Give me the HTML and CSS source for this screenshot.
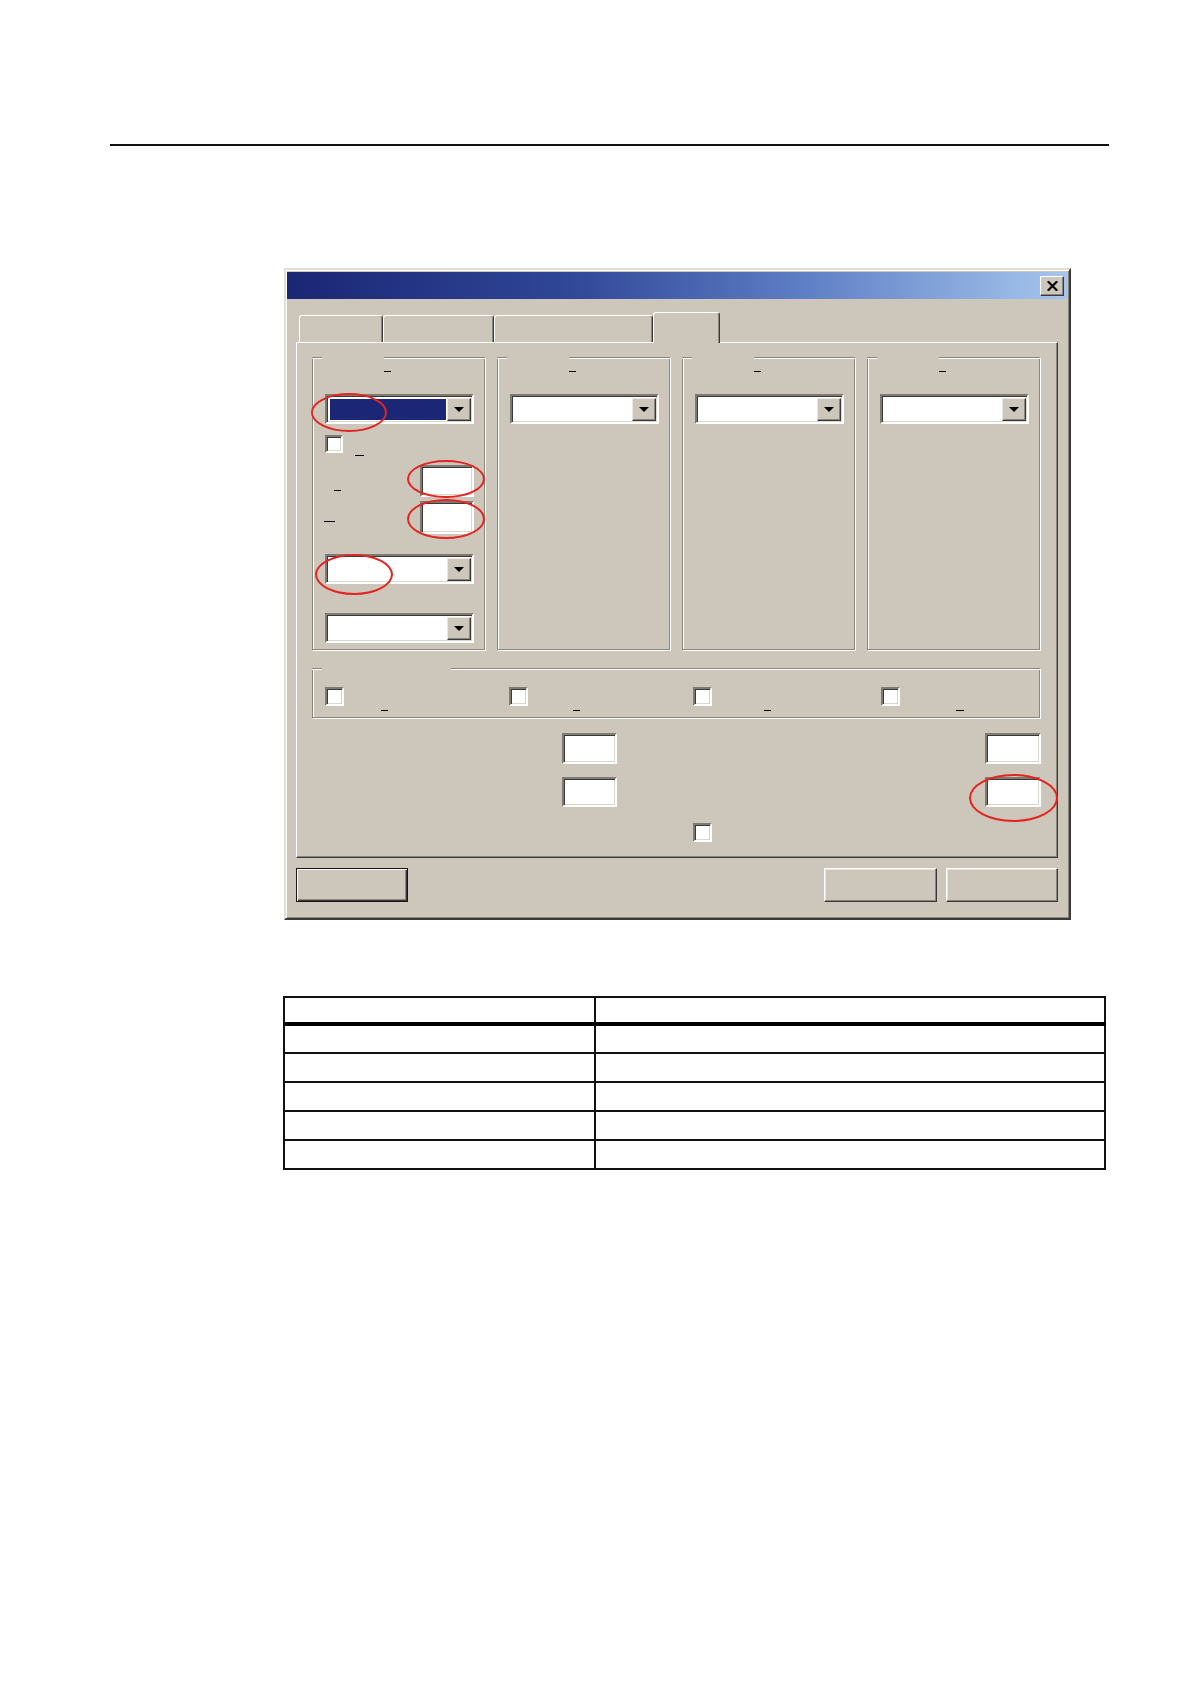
FILE: index.html
```html
<!DOCTYPE html>
<html lang="de">
<head>
<meta charset="utf-8">
<title>Dialog</title>
<link rel="stylesheet" href="styles.css">
</head>
<body>
<div class="page">
  <div class="rule"></div>

  <div class="dialog">
    <div class="titlebar">
      <button class="close" aria-label="Schließen">
        <svg width="11" height="10" viewBox="0 0 11 10"><path d="M1.5 1 L9.5 9 M9.5 1 L1.5 9" stroke="#000" stroke-width="2.2" stroke-linecap="square"/></svg>
      </button>
    </div>

    <div class="tabs">
      <div class="tab t1"></div>
      <div class="tab t2"></div>
      <div class="tab t3"></div>
      <div class="tab active t4"></div>
    </div>

    <div class="panel">
      <div class="groups">
        <div class="group">
          <div class="gtop"><span class="seg lead"></span><span class="gap"></span><span class="seg rest"></span></div>
          <span class="ul gl"></span>
          <div class="combo"><div class="field sel"></div><div class="drop"><i></i></div></div>
          <div class="cbrow"><span class="cb"></span><span class="ul"></span></div>
          <div class="frow f1"><span class="ul"></span><span class="tb"></span></div>
          <div class="frow f2"><span class="ul"></span><span class="tb"></span></div>
          <div class="combo c2"><div class="field"></div><div class="drop"><i></i></div></div>
          <div class="combo c3"><div class="field"></div><div class="drop"><i></i></div></div>
        </div>
        <div class="group">
          <div class="gtop"><span class="seg lead"></span><span class="gap"></span><span class="seg rest"></span></div>
          <span class="ul gl"></span>
          <div class="combo"><div class="field"></div><div class="drop"><i></i></div></div>
        </div>
        <div class="group">
          <div class="gtop"><span class="seg lead"></span><span class="gap"></span><span class="seg rest"></span></div>
          <span class="ul gl"></span>
          <div class="combo"><div class="field"></div><div class="drop"><i></i></div></div>
        </div>
        <div class="group">
          <div class="gtop"><span class="seg lead"></span><span class="gap"></span><span class="seg rest"></span></div>
          <span class="ul gl"></span>
          <div class="combo"><div class="field"></div><div class="drop"><i></i></div></div>
        </div>
      </div>

      <div class="group bgroup">
        <div class="gtop"><span class="seg lead"></span><span class="gap wide"></span><span class="seg rest"></span></div>
        <div class="brow">
          <div class="bcell b1"><span class="cb"></span><span class="ul"></span></div>
          <div class="bcell b2"><span class="cb"></span><span class="ul"></span></div>
          <div class="bcell b3"><span class="cb"></span><span class="ul"></span></div>
          <div class="bcell b4"><span class="cb"></span><span class="ul"></span></div>
        </div>
      </div>

      <div class="lower">
        <span class="tb ta1"></span>
        <span class="tb tc1"></span>
        <span class="tb ta2"></span>
        <span class="tb tc2"></span>
      </div>
      <div class="lcheck"><span class="cb"></span></div>
    </div>

    <div class="buttons">
      <button class="btn default"></button>
      <div class="right">
        <button class="btn w113"></button>
        <button class="btn"></button>
      </div>
    </div>

    <span class="mark m1"></span>
    <span class="mark m2"></span>
    <span class="mark m3"></span>
    <span class="mark m4"></span>
    <span class="mark m5"></span>
  </div>

  <table class="tbl">
    <colgroup><col class="col1"><col class="col2"></colgroup>
    <thead><tr><th></th><th></th></tr></thead>
    <tbody>
      <tr><td></td><td></td></tr>
      <tr><td></td><td></td></tr>
      <tr><td></td><td></td></tr>
      <tr><td></td><td></td></tr>
      <tr><td></td><td></td></tr>
    </tbody>
  </table>
</div>
</body>
</html>
```

FILE: styles.css
```css
* { box-sizing: border-box; }

body {
  margin: 0;
  background: #fff;
  font-family: "Liberation Sans", Arial, sans-serif;
  font-size: 12px;
  color: #000;
}

.page {
  width: 1190px;
  height: 1684px;
  padding-top: 144px;
}

.rule {
  margin-left: 110px;
  width: 999px;
  height: 2px;
  background: #111;
}

/* ---------- dialog frame ---------- */
.dialog {
  position: relative;
  margin: 122px 0 0 284px;
  width: 787px;
  height: 652px;
  background: #cdc6ba;
  border: 2px solid;
  border-color: #e4dfd6 #3c3a36 #3c3a36 #e4dfd6;
  box-shadow: inset 1px 1px 0 #fff, inset -1px -1px 0 #8a867e;
  padding: 2px 1px 0 1px;
}

.titlebar {
  height: 27px;
  background: linear-gradient(to right, #1b2675 0%, #2f4596 35%, #5c7cc4 65%, #a6c6ee 100%);
  display: flex;
  justify-content: flex-end;
  align-items: center;
  padding-right: 4px;
}

.close {
  width: 24px;
  height: 20px;
  padding: 0;
  margin: 0;
  background: #cdc6ba;
  border: 1px solid;
  border-color: #fff #3c3a36 #3c3a36 #fff;
  box-shadow: inset -1px -1px 0 #8a867e;
  display: flex;
  align-items: center;
  justify-content: center;
}

/* ---------- tabs ---------- */
.tabs {
  position: relative;
  z-index: 1;
  display: flex;
  align-items: flex-end;
  height: 30px;
  margin: 13px 0 0 12px;
}

.tab {
  height: 27px;
  background: #cdc6ba;
  border-top: 1px solid #fff;
  border-left: 1px solid #fff;
  border-right: 1px solid #3c3a36;
  box-shadow: inset -1px 0 0 #8a867e;
  border-radius: 3px 3px 0 0;
}
.t1 { width: 84px; }
.t2 { width: 111px; }
.t3 { width: 159px; }
.t4 { width: 67px; }
.tab.active {
  height: 31px;
  margin-bottom: -1px;
}

/* ---------- tab panel ---------- */
.panel {
  margin: 0 10px 0 9px;
  height: 516px;
  border-top: 1px solid #fff;
  border-left: 1px solid #fff;
  border-right: 1px solid #3c3a36;
  border-bottom: 1px solid #3c3a36;
  box-shadow: inset -1px -1px 0 #8a867e;
  padding: 14px 17px 0 15px;
}

.groups {
  display: grid;
  grid-template-columns: repeat(4, 1fr);
  column-gap: 12px;
}

.group {
  height: 293px;
  border: 1px solid #8a867e;
  border-top: 0;
  box-shadow: inset 1px 0 0 #fff, 1px 1px 0 #fff;
  padding: 0 10px 0 12px;
}

.gtop {
  display: flex;
  height: 2px;
  margin: 0 -11px 0 -13px;
}
.seg {
  display: block;
  height: 2px;
  border-top: 1px solid #8a867e;
  border-bottom: 1px solid #fff;
}
.lead { width: 10px; }
.gap { width: 62px; }
.gap.wide { width: 129px; }
.rest { flex: 1; }

.ul {
  display: block;
  height: 1px;
  background: #000;
  flex: none;
}
.gl {
  width: 7px;
  margin: 12px 0 0 59px;
}

/* sunken white controls */
.combo, .cb, .tb {
  background: #fff;
  border: 2px solid;
  border-color: #7f7b74 #fff #fff #7f7b74;
  box-shadow: inset 1px 1px 0 #3c3a36, inset -1px -1px 0 #dcd7ce;
}

.combo {
  display: flex;
  height: 30px;
  margin-top: 22px;
  padding: 2px 1px 1px 2px;
}
.field { flex: 1; }
.field.sel {
  margin: 1px;
  background: #1b2676;
}
.drop {
  width: 24px;
  background: #cdc6ba;
  border: 1px solid;
  border-color: #ece8e0 #3c3a36 #3c3a36 #ece8e0;
  box-shadow: inset -1px -1px 0 #8a867e;
  display: flex;
  align-items: center;
  justify-content: center;
}
.drop i {
  display: block;
  width: 0;
  height: 0;
  border-left: 5px solid transparent;
  border-right: 5px solid transparent;
  border-top: 5px solid #000;
}

.cb {
  display: block;
  flex: none;
  width: 18px;
  height: 18px;
}

.cbrow {
  display: flex;
  height: 18px;
  margin-top: 11px;
}
.cbrow .ul {
  width: 9px;
  margin: 20px 0 0 12px;
}

.frow {
  display: flex;
  justify-content: space-between;
}
.frow .tb {
  display: block;
  width: 54px;
  height: 100%;
}
.f1 { margin-top: 12px; height: 32px; }
.f2 { margin-top: 4px; height: 33px; }
.f1 .ul { width: 7px; margin: 25px 0 0 9px; }
.f2 .ul { width: 11px; margin: 20px 0 0 -1px; }

.c2 { margin-top: 20px; }
.c3 { margin-top: 29px; }

/* bottom option group */
.group.bgroup {
  height: 50px;
  margin-top: 18px;
}
.brow {
  display: grid;
  grid-template-columns: 184px 184px 188px 1fr;
  margin-top: 17px;
}
.bcell { display: flex; }
.bcell .cb { width: 19px; height: 19px; }
.bcell .ul { margin-top: 23px; }
.b1 .ul { width: 7px; margin-left: 37px; }
.b2 .ul { width: 7px; margin-left: 45px; }
.b3 .ul { width: 7px; margin-left: 52px; }
.b4 .ul { width: 8px; margin-left: 56px; }

/* lower fields */
.lower {
  display: grid;
  grid-template-columns: 250px 55px 1fr 56px;
  grid-template-rows: 31px 30px;
  row-gap: 13px;
  margin: 15px -1px 0 0;
}
.lower .tb { display: block; }
.ta1 { grid-column: 2; grid-row: 1; }
.tc1 { grid-column: 4; grid-row: 1; }
.ta2 { grid-column: 2; grid-row: 2; }
.tc2 { grid-column: 4; grid-row: 2; }

.lcheck {
  margin: 16px 0 0 381px;
}
.lcheck .cb { width: 19px; height: 19px; }

/* ---------- buttons ---------- */
.buttons {
  display: flex;
  justify-content: space-between;
  height: 34px;
  margin: 10px 10px 0 9px;
}
.right {
  display: flex;
  gap: 9px;
}
.btn {
  width: 112px;
  height: 34px;
  padding: 0;
  margin: 0;
  background: #cdc6ba;
  border: 1px solid;
  border-color: #fff #3c3a36 #3c3a36 #fff;
  box-shadow: inset -1px -1px 0 #8a867e, inset 1px 1px 0 #e8e4dc;
}
.btn.w113 { width: 113px; }
.btn.default {
  border: 1px solid #1c1212;
  box-shadow: inset 1px 1px 0 #fff, inset -1px -1px 0 #3c3a36, inset -2px -2px 0 #8a867e;
}

/* ---------- red annotation ellipses ---------- */
.mark {
  position: absolute;
  border: 2px solid #e32420;
  border-radius: 50%;
}
.m1 { left: 25px; top: 123px; width: 76px; height: 39px; }
.m2 { left: 121px; top: 190px; width: 78px; height: 38px; }
.m3 { left: 121px; top: 229px; width: 78px; height: 40px; }
.m4 { left: 29px; top: 284px; width: 78px; height: 41px; }
.m5 { left: 683px; top: 504px; width: 89px; height: 48px; }

/* ---------- table ---------- */
.tbl {
  margin: 76px 0 0 283px;
  width: 821px;
  border-collapse: collapse;
  table-layout: fixed;
}
.col1 { width: 311px; }
.col2 { width: 510px; }
.tbl th, .tbl td {
  border: 2px solid #111;
  padding: 0;
}
.tbl th {
  height: 27px;
  border-bottom: 4px solid #000;
}
.tbl td { height: 29px; }
```
